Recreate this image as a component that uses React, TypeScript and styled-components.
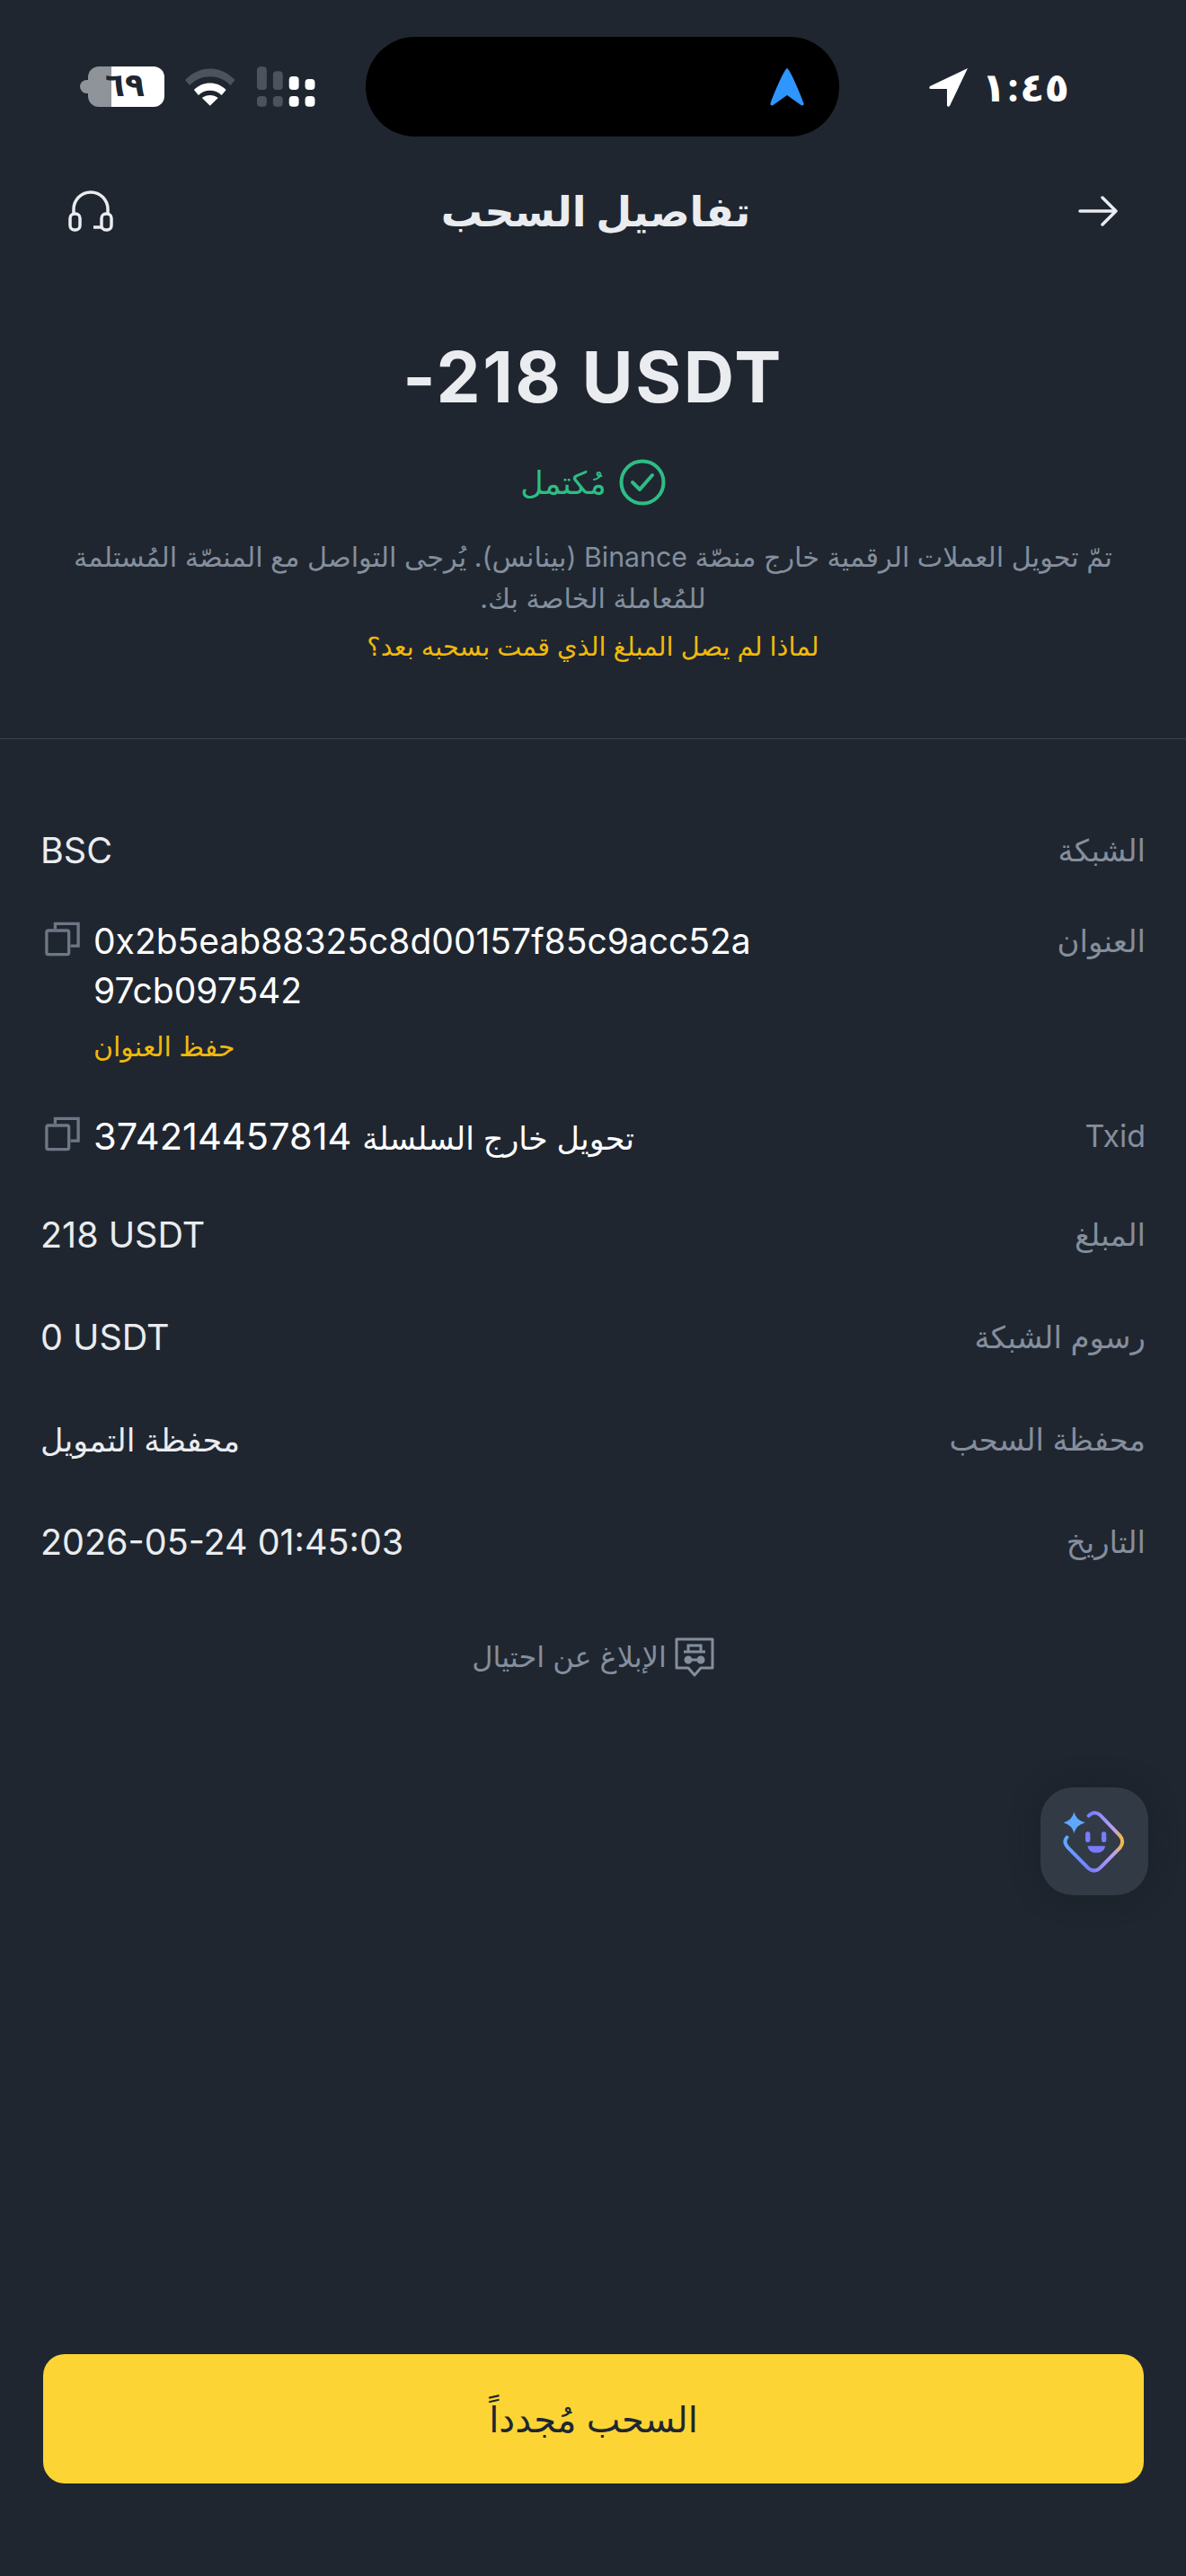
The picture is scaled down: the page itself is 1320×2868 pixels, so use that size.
import React from "react";
import styled, { createGlobalStyle } from "styled-components";

const Global = createGlobalStyle`
  html, body { margin: 0; padding: 0; background: #1f2630; }
  * { box-sizing: border-box; }
`;

const Page = styled.div`
  position: relative;
  display: flex;
  flex-direction: column;
  width: 1320px;
  height: 2868px;
  overflow: hidden;
  background: #1f2630;
  color: #eaecef;
  font-family: Inter, "DejaVu Sans", sans-serif;
  direction: rtl;
`;

const StatusBar = styled.div`
  display: flex;
  align-items: center;
  height: 111px;
  margin-top: 41px;
  padding: 0 130px 0 98px;
`;

const Clock = styled.div`
  display: flex;
  flex: none;
  align-items: center;
  gap: 15px;
  width: 153px;
  font-size: 45px;
  font-weight: 700;
  color: #fff;

  svg {
    flex: none;
  }
`;

const Island = styled.div`
  display: flex;
  flex: none;
  align-items: center;
  width: 527px;
  height: 111px;
  margin: 0 103px 0 56px;
  padding-right: 39px;
  border-radius: 55px;
  background: #000;
`;

const Indicators = styled.div`
  display: flex;
  flex: none;
  align-items: center;
  gap: 22px;
  width: 253px;
`;

const Battery = styled.div`
  position: relative;
  flex: none;
  width: 85px;
  height: 45px;
  padding-right: 3px;
  border-radius: 12px;
  background: linear-gradient(to right, #8f949b 0 26px, #fff 26px);
  color: #1f2630;
  font-size: 36px;
  font-weight: 700;
  line-height: 40px;
  text-align: center;

  &::before {
    content: "";
    position: absolute;
    left: -9px;
    top: 15px;
    width: 9px;
    height: 15px;
    border-radius: 8px 0 0 8px;
    background: #8f949b;
  }
`;

const Header = styled.div`
  display: flex;
  align-items: center;
  justify-content: space-between;
  height: 60px;
  margin-top: 53px;
  padding: 0 76px;
`;

const Title = styled.h1`
  margin: 0;
  font-size: 46px;
  font-weight: 700;
  color: #eaecef;
`;

const Summary = styled.section`
  display: flex;
  flex-direction: column;
  align-items: center;
  margin-top: 109px;
  padding: 0 40px;
`;

const Amount = styled.div`
  direction: ltr;
  font-size: 78px;
  font-weight: 700;
  letter-spacing: 2.500px;
  line-height: 92px;
  color: #eaecef;
`;

const Status = styled.div`
  display: flex;
  align-items: center;
  gap: 14px;
  margin-top: 45px;
  font-size: 35px;
  line-height: 52px;
  color: #2ebd85;
`;

const Note = styled.p`
  width: 1200px;
  margin: 34px 0 0;
  font-size: 30.300px;
  line-height: 46px;
  text-align: center;
  color: #848e9c;
`;

const HelpLink = styled.div`
  margin-top: 8px;
  font-size: 28.800px;
  line-height: 46px;
  color: #f0b90b;
`;

const Divider = styled.hr`
  width: 100%;
  height: 1px;
  margin: 79px 0 0;
  border: 0;
  background: #3b424e;
`;

const Details = styled.section`
  display: flex;
  flex-direction: column;
  margin-top: 96px;
  padding: 0 45px;
`;

const Row = styled.div<{ $gap: number }>`
  display: flex;
  align-items: flex-start;
  justify-content: space-between;
  margin-bottom: ${({ $gap }) => $gap}px;
`;

const Label = styled.div`
  font-size: 34px;
  line-height: 56px;
  color: #848e9c;
`;

const Value = styled.div`
  display: flex;
  align-items: flex-start;
  gap: 15px;
  font-size: 39.500px;
  line-height: 56px;
  color: #eaecef;
`;

const Latin = styled.span`
  direction: ltr;
`;

const ArabicValue = styled.span`
  font-size: 35px;
`;

const AddressBlock = styled.div`
  width: 745px;
  direction: ltr;
  font-size: 39px;
  line-height: 55px;
  text-align: left;
  word-break: break-all;
  color: #fff;
`;

const TxText = styled.div`
  direction: ltr;
  font-size: 41.600px;
  color: #fff;
`;

const SaveLink = styled.div`
  margin-top: 13px;
  font-size: 30px;
  line-height: 44px;
  direction: rtl;
  text-align: left;
  color: #f0b90b;
`;

const CopyIcon = styled.svg`
  flex: none;
  width: 39px;
  height: 39px;
  margin-top: 6px;
  margin-left: 5px;
`;

const Report = styled.div`
  display: flex;
  align-items: center;
  justify-content: center;
  gap: 9px;
  margin-top: 77px;
  font-size: 32px;
  line-height: 46px;
  color: #848e9c;
`;

const FloatButton = styled.div`
  position: absolute;
  left: 1158px;
  top: 1990px;
  display: flex;
  align-items: center;
  justify-content: center;
  width: 120px;
  height: 120px;
  border-radius: 36px;
  background: #323a46;
  box-shadow: 0 0 32px rgba(24, 26, 32, 0.45);
`;

const Footer = styled.div`
  display: flex;
  margin-top: auto;
  padding: 0 47px 103px 48px;
`;

const PrimaryButton = styled.button`
  width: 100%;
  height: 144px;
  border: 0;
  border-radius: 24px;
  background: #fcd535;
  color: #202630;
  font-family: inherit;
  font-size: 40px;
`;

const Copy = () => (
  <CopyIcon viewBox="1 2 41 40" fill="none" stroke="#6e7785" strokeWidth="3.500">
    <rect x="3" y="12" width="26" height="28" rx="2" />
    <path d="M13 10V4h27v26h-9" />
  </CopyIcon>
);

const App = () => (
  <Page>
    <Global />
    <StatusBar>
      <Clock>
        <span>١:٤٥</span>
        <svg width="44" height="44" viewBox="0 0 44 44" fill="#fff">
          <path d="M43 1 1 21c-1 1-1 3 1 3h18v18c0 2 2 2 3 1z" />
        </svg>
      </Clock>
      <Island>
        <svg width="38" height="42" viewBox="0 0 38 42" fill="#2f95ff">
          <path d="M19 0C22 0 36 34 37.500 39c.5 2-1 3-3 2L19 30 3.500 41c-2 1-3.500 0-3-2C2 34 16 0 19 0z" />
        </svg>
      </Island>
      <Indicators>
        <svg width="67" height="46" viewBox="0 0 67 46">
          <g fill="#fff">
            <rect x="37" y="11" width="11" height="15" rx="4" />
            <rect x="55" y="14" width="11" height="12" rx="4" />
            <rect x="37" y="33" width="11" height="12" rx="4" />
            <rect x="55" y="33" width="11" height="12" rx="4" />
          </g>
          <g fill="#4d525c">
            <rect x="1" y="0" width="11" height="26" rx="4" />
            <rect x="19" y="5" width="11" height="21" rx="4" />
            <rect x="1" y="33" width="11" height="12" rx="4" />
            <rect x="19" y="33" width="11" height="12" rx="4" />
          </g>
        </svg>
        <svg width="58" height="42" viewBox="0 0 58 42">
          <path d="M1 13C17-4 41-4 57 13l-5 6C39 6 19 6 6 19z" fill="#4d525c" />
          <path d="M11 24c10-10 26-10 36 0l-5 6c-7-7-19-7-26 0z" fill="#fff" />
          <path d="M20 33c5-4 13-4 18 0l-9 9z" fill="#fff" />
        </svg>
        <Battery>٦٩</Battery>
      </Indicators>
    </StatusBar>

    <Header>
      <svg width="44" height="34" viewBox="0 0 44 34" fill="none" stroke="#eaecef" strokeWidth="3.500" strokeLinecap="round" strokeLinejoin="round">
        <path d="M27 2l15 15-15 15M42 17H2" />
      </svg>
      <Title>تفاصيل السحب</Title>
      <svg width="50" height="46" viewBox="0 0 50 46" fill="none" stroke="#eaecef" strokeWidth="3.500" strokeLinejoin="round">
        <path d="M6 26V21a19 19 0 0 1 38 0v5" />
        <rect x="2" y="26" width="11" height="18" rx="5" />
        <rect x="37" y="26" width="11" height="18" rx="5" />
        <path d="M37 41H28" />
      </svg>
    </Header>

    <Summary>
      <Amount>-218 USDT</Amount>
      <Status>
        <svg width="52" height="52" viewBox="0 0 52 52" fill="none" stroke="#2ebd85" strokeWidth="4">
          <circle cx="26" cy="26" r="23.500" />
          <path d="M15 26l8 8 14-16" strokeLinecap="round" strokeLinejoin="round" />
        </svg>
        <span>مُكتمل</span>
      </Status>
      <Note>تمّ تحويل العملات الرقمية خارج منصّة Binance (بينانس). يُرجى التواصل مع المنصّة المُستلمة للمُعاملة الخاصة بك.</Note>
      <HelpLink>لماذا لم يصل المبلغ الذي قمت بسحبه بعد؟</HelpLink>
    </Summary>

    <Divider />

    <Details>
      <Row $gap={45}>
        <Label>الشبكة</Label>
        <Value>BSC</Value>
      </Row>
      <Row $gap={50}>
        <Label>العنوان</Label>
        <Value>
          <AddressBlock>
            0x2b5eab88325c8d00157f85c9acc52a97cb097542
            <SaveLink>حفظ العنوان</SaveLink>
          </AddressBlock>
          <Copy />
        </Value>
      </Row>
      <Row $gap={52}>
        <Label>Txid</Label>
        <Value>
          <TxText>
            374214457814 <ArabicValue>تحويل خارج السلسلة</ArabicValue>
          </TxText>
          <Copy />
        </Value>
      </Row>
      <Row $gap={58}>
        <Label>المبلغ</Label>
        <Value><Latin>218 USDT</Latin></Value>
      </Row>
      <Row $gap={58}>
        <Label>رسوم الشبكة</Label>
        <Value><Latin>0 USDT</Latin></Value>
      </Row>
      <Row $gap={58}>
        <Label>محفظة السحب</Label>
        <Value><ArabicValue>محفظة التمويل</ArabicValue></Value>
      </Row>
      <Row $gap={0}>
        <Label>التاريخ</Label>
        <Value><Latin>2026-05-24 01:45:03</Latin></Value>
      </Row>
    </Details>

    <Report>
      <svg width="44" height="44" viewBox="0 0 44 44" fill="none" stroke="#848e9c" strokeWidth="3">
        <path d="M2 2h40v32H29l-7 8-7-8H2z" strokeLinejoin="round" />
        <path d="M15 15v-6h14v6M10 16h24" />
        <circle cx="15" cy="25" r="3" fill="#848e9c" />
        <circle cx="29" cy="25" r="3" fill="#848e9c" />
        <path d="M11 25h22" />
      </svg>
      <span>الإبلاغ عن احتيال</span>
    </Report>

    <FloatButton>
      <svg width="75" height="73" viewBox="155 160 225 220" fill="none">
        <defs>
          <linearGradient id="aiRing" x1="0" y1="0.5" x2="1" y2="0.5">
            <stop offset="0" stopColor="#5ea8ff" />
            <stop offset="0.45" stopColor="#7a7cff" />
            <stop offset="0.85" stopColor="#b9a0f5" />
            <stop offset="1" stopColor="#f5b93f" />
          </linearGradient>
        </defs>
        <path d="M247 183Q265 164 285 180L352 250Q368 270 352 290L285 358Q265 376 245 358L178 290Q160 270 174 255" stroke="url(#aiRing)" strokeWidth="12" strokeLinecap="round" />
        <path d="M198 170Q204 198 235 206 204 214 198 243 192 214 163 206 192 198 198 170z" fill="#5ea8ff" />
        <rect x="236" y="236" width="16" height="36" rx="8" fill="#7a7cff" />
        <rect x="290" y="236" width="16" height="36" rx="8" fill="#7a7cff" />
        <path d="M243 284H303Q298 307 272 307 248 307 243 284z" fill="#7a7cff" />
      </svg>
    </FloatButton>

    <Footer>
      <PrimaryButton>السحب مُجدداً</PrimaryButton>
    </Footer>
  </Page>
);

export default App;
